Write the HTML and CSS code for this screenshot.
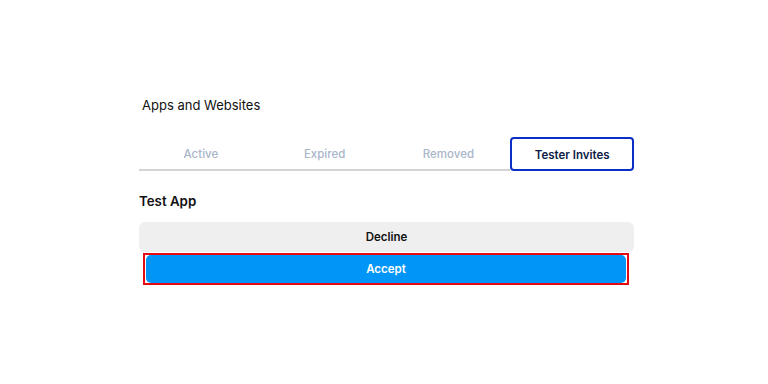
FILE: index.html
```html
<!DOCTYPE html>
<html lang="en">
<head>
    <meta charset="UTF-8">
    <meta name="viewport" content="width=device-width, initial-scale=1.0">
    <title>Apps and Websites</title>
    <link rel="stylesheet" href="styles.css">
</head>
<body>

<div class="panel">
    <h2 class="titulo">Apps and Websites</h2>

    <div class="tabs">
        <button class="tab">Active</button>
        <button class="tab">Expired</button>
        <button class="tab">Removed</button>
        <button class="tab activo">Tester Invites</button>
    </div>

    <h3 class="app">Test App</h3>

    <div class="acciones">
        <button class="btnDecline">Decline</button>
        <div class="foco">
            <button class="btnAccept">Accept</button>
        </div>
    </div>
</div>

</body>
</html>
```

FILE: styles.css
```css
*{margin: 0; padding: 0; box-sizing: border-box;}

body{
    font-family: Inter, "Liberation Sans", sans-serif;
    background: #fff;
    color: #111;
}
.panel{
    width: 495px;
    margin-left: 139px;
    padding-top: 96px;
    display: flex;
    flex-direction: column;
}
.titulo{
    font-size: 13px;
    font-weight: 400;
    line-height: 18px;
    padding-left: 3px;
    color: #111;
}
.tabs{
    display: grid;
    grid-template-columns: repeat(4, minmax(0, 1fr));
    margin-top: 23px;
    height: 34px;
}
.tab{
    border: none;
    background: none;
    border-bottom: 2px solid #d4d4d4;
    font-family: inherit;
    font-size: 11.5px;
    font-weight: 500;
    color: #a9b5c9;
    padding-top: 2px;
}
.tab.activo{
    border: 2px solid #0b2fc4;
    border-radius: 4px;
    color: #0c1c47;
    font-weight: 600;
}
.app{
    font-size: 13.3px;
    font-weight: 600;
    line-height: 18px;
    margin-top: 21px;
}
.acciones{
    margin-top: 12px;
    display: flex;
    flex-direction: column;
}
.btnDecline{
    height: 30px;
    border: none;
    border-radius: 6px;
    background: #efefef;
    font-family: inherit;
    font-size: 11.5px;
    font-weight: 600;
    color: #111;
}
.foco{
    margin: 1px 5px 0 4px;
    border: 2px solid #e50914;
    padding: 0 1px;
    height: 32px;
    display: flex;
    align-items: center;
}
.btnAccept{
    flex: 1;
    height: 28px;
    border: none;
    border-radius: 5px;
    background: #0095f6;
    color: #fff;
    font-family: inherit;
    font-size: 11.5px;
    font-weight: 600;
    padding-bottom: 1px;
}
```
